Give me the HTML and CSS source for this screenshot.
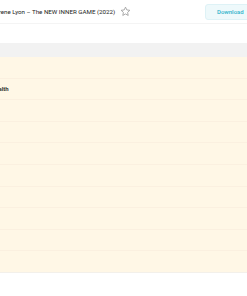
FILE: index.html
```html
<!DOCTYPE html>
<html lang="en">
<head>
    <meta charset="UTF-8">
    <title>Irene Lyon – The NEW INNER GAME (2022)</title>
    <link rel="stylesheet" href="styles.css">
</head>
<body>
    <div class="header">
        <div class="title">
            <span>Irene Lyon – The NEW INNER GAME (2022)</span>
            <svg class="star" width="11" height="11" viewBox="0 0 24 24">
                <path d="M12 2.5l2.9 6.1 6.6.8-4.9 4.6 1.3 6.6L12 17.3l-5.9 3.3 1.3-6.6-4.9-4.6 6.6-.8z" fill="none" stroke="#999" stroke-width="1.8" stroke-linejoin="round"/>
            </svg>
        </div>
        <button class="download">Download</button>
    </div>

    <div class="table">
        <div class="table-head"></div>
        <div class="row"></div>
        <div class="row"><span class="cell">Health</span></div>
        <div class="row"></div>
        <div class="row"></div>
        <div class="row"></div>
        <div class="row"></div>
        <div class="row"></div>
        <div class="row"></div>
        <div class="row"></div>
        <div class="row"></div>
    </div>
</body>
</html>
```

FILE: styles.css
```css
body {
    margin: 0;
    font-family: Roboto, "Liberation Sans", sans-serif;
    background-color: #fff;
    color: #333;
    overflow: hidden;
}

.header {
    display: flex;
    align-items: center;
    justify-content: space-between;
    height: 23px;
    border-bottom: 1px solid #f4f4f4;
    margin-right: -12px;
}

.title {
    display: flex;
    align-items: center;
    gap: 5px;
    margin-left: -3px;
    font-size: 6.2px;
    color: #222;
}

.star {
    display: block;
}

.download {
    font-family: inherit;
    font-size: 6px;
    font-weight: 500;
    color: #2fb3cb;
    background-color: #eef9fb;
    border: 1px solid #def2f6;
    border-radius: 3px;
    height: 16px;
    width: 54px;
    text-align: left;
    padding: 0 0 0 11px;
}

.table {
    margin-top: 19px;
}

.table-head {
    height: 14px;
    background-color: #f2f2f2;
}

.row {
    height: 20.6px;
    background-color: #fff7e6;
    border-bottom: 1px solid #fbf0e0;
    display: flex;
    align-items: center;
    font-size: 6px;
    font-weight: bold;
    color: #333;
}

.row:last-child {
    border-bottom: 1px solid #f3f0ea;
}

.cell {
    margin-left: -9px;
}
```
